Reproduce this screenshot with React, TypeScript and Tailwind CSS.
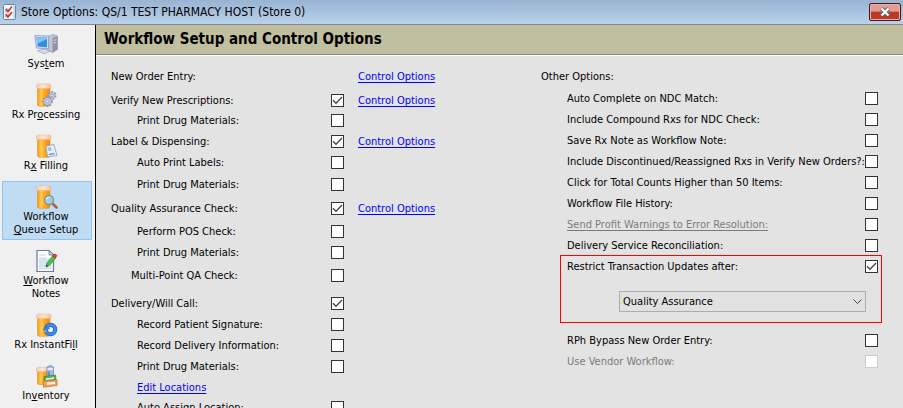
import { useState } from 'react';
import type { ReactNode } from 'react';
import clsx from 'clsx';

type NavItem = {
  id: string;
  label: ReactNode;
  icon: ReactNode;
};

type Option = {
  id: string;
  label: string;
  checked?: boolean;
  disabled?: boolean;
};

function Bottle({ children }: { children?: ReactNode }) {
  return (
    <svg viewBox="0 0 24 24" className="h-6 w-6" aria-hidden="true">
      <defs>
        <linearGradient id="bottle" x1="0" x2="1">
          <stop offset="0" stopColor="#f39a10" />
          <stop offset="0.3" stopColor="#ffcb55" />
          <stop offset="0.55" stopColor="#ffa91f" />
          <stop offset="1" stopColor="#f08a0a" />
        </linearGradient>
        <linearGradient id="cap" x1="0" x2="1">
          <stop offset="0" stopColor="#f8cbb0" />
          <stop offset="0.5" stopColor="#ffe6d6" />
          <stop offset="1" stopColor="#f3bc9c" />
        </linearGradient>
      </defs>
      <path d="M3.500 4.500h12.500v17q0 1.800-1.800 1.800h-8.900q-1.800 0-1.800-1.800z" fill="url(#bottle)" stroke="#e08a1c" strokeWidth="0.500" />
      <rect x="2.500" y="1" width="14.500" height="4.500" rx="1.500" fill="url(#cap)" stroke="#e9b595" strokeWidth="0.500" />
      {children}
    </svg>
  );
}

function Gear({ cx, cy, r }: { cx: number; cy: number; r: number }) {
  return (
    <g>
      <circle cx={cx} cy={cy} r={r} fill="none" stroke="#8a90b4" strokeWidth="2.200" strokeDasharray="1.700 1.300" />
      <circle cx={cx} cy={cy} r={r - 0.4} fill="#c9cee6" stroke="#8d94b8" strokeWidth="0.600" />
      <circle cx={cx} cy={cy} r={r / 3} fill="#fff" stroke="#737a9e" strokeWidth="0.700" />
    </g>
  );
}

function SystemIcon() {
  return (
    <svg viewBox="0 0 24 24" className="h-6 w-6" aria-hidden="true">
      <path d="M13.500 4.500l5.500-2 4.500 1.500v13.500l-5 3-5-2z" fill="#c3c6d2" stroke="#8b8fa1" strokeWidth="0.600" />
      <path d="M18.500 6l5-2v13.500l-5 3z" fill="#8f93a6" />
      <path d="M19.700 8.500l2.700-1M19.700 11l2.700-1" stroke="#e2e5ee" strokeWidth="0.900" />
      <path d="M3.500 18.800l6.500-1.800 6.500 2-6.500 2.800z" fill="#d9dbe4" stroke="#9a9eb0" strokeWidth="0.700" />
      <path d="M.8 3.500l13.700.5v12.800L2.500 16z" fill="#dcdfea" stroke="#8d93ab" strokeWidth="0.800" />
      <path d="M2.300 5l10.700.5v9.700l-9.300-.7z" fill="#2b8eea" />
      <path d="M2.300 5l10.700.5v1.500L3.200 12z" fill="#7cc2fb" />
    </svg>
  );
}

function NotesIcon() {
  return (
    <svg viewBox="0 0 24 24" className="h-6 w-6" aria-hidden="true">
      <path d="M3 1.500h12l4.500 4.500v16.500H3z" fill="#fbfcfe" stroke="#6f7a92" strokeWidth="1.200" />
      <path d="M5 9.500h12.500v11H5z" fill="#d9e3f1" />
      <path d="M15 1.500v4.500h4.500z" fill="#c9d2e2" stroke="#6f7a92" strokeWidth="0.800" />
      <path d="M5.500 6h6M5.500 9h7" stroke="#c3ccdc" strokeWidth="0.800" />
      <path d="M12 18l.8-3.800 6.200-7.700 3 2.300-6.700 7.700z" fill="#4cc43b" stroke="#2d8f26" strokeWidth="0.700" />
      <path d="M18.300 7l1.500-1.800q2-.8 3.200 1.400l-1.500 2.400z" fill="#e8402f" stroke="#b42218" strokeWidth="0.600" />
      <path d="M12 18l.6-2.300 1.600 1.200z" fill="#333" />
    </svg>
  );
}

const navItems: NavItem[] = [
  { id: 'system', label: <>Sys<u>t</u>em</>, icon: <SystemIcon /> },
  {
    id: 'processing',
    label: <>Rx Pr<u>o</u>cessing</>,
    icon: (
      <Bottle>
        <Gear cx={18} cy={12.5} r={3.4} />
        <Gear cx={13.5} cy={18.5} r={4.2} />
      </Bottle>
    ),
  },
  {
    id: 'filling',
    label: <>R<u>x</u> Filling</>,
    icon: (
      <Bottle>
        <path d="M12 12l8-1.500 3 11-9.500 1.500z" fill="#e6eefb" stroke="#8a9cc4" strokeWidth="0.800" />
        <path d="M13.500 13.500l3.500-.6.800 3.500-3.400.6z" fill="#a9bde4" />
        <path d="M14.800 20.500l5.500-.9" stroke="#5f78b4" strokeWidth="1.200" />
      </Bottle>
    ),
  },
  {
    id: 'queue',
    label: <>Workflow<br /><u>Q</u>ueue Setup</>,
    icon: (
      <Bottle>
        <path d="M18.300 18.300l4.200 4.200" stroke="#b0603a" strokeWidth="2.600" strokeLinecap="round" />
        <circle cx="15" cy="15" r="4.500" fill="#9fcfe4" stroke="#7f939e" strokeWidth="1.300" />
        <path d="M12.300 14.300q1-2.300 3.400-2.300" stroke="#eefaff" strokeWidth="1.200" fill="none" />
      </Bottle>
    ),
  },
  { id: 'notes', label: <><u>W</u>orkflow<br />Notes</>, icon: <NotesIcon /> },
  {
    id: 'instant',
    label: <>Rx InstantFi<u>l</u>l</>,
    icon: (
      <Bottle>
        <circle cx="16.500" cy="16.500" r="4.700" fill="#f4f0ea" stroke="#1f66cc" strokeWidth="4.200" />
        <circle cx="16.500" cy="16.500" r="4.700" fill="none" stroke="#3a8bea" strokeWidth="2.800" />
        <path d="M9 17.500l2.500-6.500 4.500 5z" fill="#2f7de0" />
        <path d="M9 19l3.200-1.800" stroke="#ffa91f" strokeWidth="1.300" />
      </Bottle>
    ),
  },
  {
    id: 'inventory',
    label: <>In<u>v</u>entory</>,
    icon: (
      <svg viewBox="0 0 24 24" className="h-6 w-6" aria-hidden="true">
        <path d="M3.500 6h11v14.500H5q-1.500 0-1.500-1.500z" fill="url(#bottle)" stroke="#e08a1c" strokeWidth="0.500" />
        <rect x="2.500" y="3.500" width="12" height="4" rx="1.300" fill="url(#cap)" stroke="#e9b595" strokeWidth="0.500" />
        <path d="M13 3q3.500-3 6.500 0v10H13z" fill="#a3bce6" stroke="#6c86ba" strokeWidth="0.800" />
        <path d="M13.500 5h5.500" stroke="#eef4ff" strokeWidth="1.600" />
        <path d="M15 7.500v5" stroke="#5577b8" strokeWidth="1.400" />
        <path d="M10 12.500l11.500-1.500.5 5-12 1.800z" fill="#4fb445" stroke="#2f8a2b" strokeWidth="0.700" />
        <path d="M12 14.200l8-1v1.800l-8 1z" fill="#e6f6e2" />
        <path d="M9.500 17l13.500-1.200v5.700l-13.500 1.700z" fill="#eda061" stroke="#bd7038" strokeWidth="0.700" />
        <path d="M13 18.400l8-.7v2.300l-8 .9z" fill="#fff0dd" />
      </svg>
    ),
  },
];

const otherOptions: Option[] = [
  { id: 'auto-complete', label: 'Auto Complete on NDC Match:' },
  { id: 'compound', label: 'Include Compound Rxs for NDC Check:' },
  { id: 'save-note', label: 'Save Rx Note as Workflow Note:' },
  { id: 'discontinued', label: 'Include Discontinued/Reassigned Rxs in Verify New Orders?:' },
  { id: 'total-counts', label: 'Click for Total Counts Higher than 50 Items:' },
  { id: 'file-history', label: 'Workflow File History:' },
];

function CheckBox({ id, checked = false, disabled }: Omit<Option, 'label'>) {
  const [on, setOn] = useState(checked);
  return (
    <span className="relative block size-[13px] shrink-0">
      <input
        id={id}
        type="checkbox"
        checked={on}
        disabled={disabled}
        onChange={(e) => setOn(e.target.checked)}
        className="block size-[13px] appearance-none border border-[#333] bg-white disabled:border-[#ccc]"
      />
      {on && (
        <svg viewBox="0 0 13 13" className="pointer-events-none absolute inset-0" aria-hidden="true">
          <path d="M2 6.300l3 3 6-6.300" fill="none" stroke="#444" strokeWidth="1.300" />
        </svg>
      )}
    </span>
  );
}

function ControlLink() {
  return (
    <a href="#control" className="ml-3.5 text-[#00f] underline underline-offset-2">
      Control Options
    </a>
  );
}

type RowProps = Option & { className?: string; children?: ReactNode };

function WorkflowRow({ id, label, checked, className, children }: RowProps) {
  return (
    <div className={clsx('flex h-[21px] items-center', className)}>
      <label htmlFor={id} className="w-[220px]">{label}</label>
      <CheckBox id={id} checked={checked} />
      {children}
    </div>
  );
}

// Sub-option, indented below its section while the boxes stay in one column
function SubRow({ id, label, className }: RowProps) {
  return (
    <div className={clsx('flex h-[21px] items-center pl-[26px]', className)}>
      <label htmlFor={id} className="w-[194px]">{label}</label>
      <CheckBox id={id} />
    </div>
  );
}

function OtherRow({ id, label, checked, disabled }: Option) {
  return (
    <div className="flex h-[21px] items-center justify-between">
      <label htmlFor={id} className={clsx(disabled && 'text-[#7b7b7b]')}>{label}</label>
      <CheckBox id={id} checked={checked} disabled={disabled} />
    </div>
  );
}

function TitleBar() {
  return (
    <header className="flex h-[25px] shrink-0 items-center border-b border-[#858585] bg-linear-to-b from-[#98b4d2] to-[#bad1ea] pr-0.5 pl-[3px]">
      <svg viewBox="0 0 13 16" className="h-4 w-[13px]" aria-hidden="true">
        <rect x="0.500" y="0.500" width="12" height="15" rx="1" fill="#f4f8fc" stroke="#5d88b0" />
        <path d="M11 1v14" stroke="#a9c8e2" />
        <path d="M2.500 5h3v3h-3zM2.500 10h3v3h-3z" fill="none" stroke="#8d9aa8" strokeWidth="0.700" />
        <path d="M3 5l2 2.500L9 2.500M3 10.500l2 2.500 4-5" fill="none" stroke="#d42a20" strokeWidth="1.500" />
      </svg>
      <h1 className="ml-[5px] grow text-xs">Store Options: QS/1 TEST PHARMACY HOST (Store 0)</h1>
      <button
        type="button"
        aria-label="Close"
        className="flex h-[18px] w-8 items-center justify-center rounded-xs border border-[#4d1515] bg-linear-to-b from-[#e09d92] from-45% to-[#b93a26] to-50% shadow-[inset_0_0_0_1px_#e8b0a6]"
      >
        <svg viewBox="0 0 12 10" className="h-2.5 w-3" aria-hidden="true">
          <path d="M2.500 1.500l7 7M9.500 1.500l-7 7" stroke="#57616e" strokeWidth="4" />
          <path d="M2.500 1.500l7 7M9.500 1.500l-7 7" stroke="#fff" strokeWidth="2.200" />
        </svg>
      </button>
    </header>
  );
}

function Sidebar() {
  const [active, setActive] = useState('queue');
  return (
    <nav className="flex w-24 shrink-0 flex-col gap-[5px] border-r border-black bg-[#f0f0f0] pt-[3px] pr-[3px] pl-0.5">
      {navItems.map(({ id, label, icon }) => (
        <button
          key={id}
          type="button"
          onClick={() => setActive(id)}
          className={clsx(
            'flex flex-col items-center gap-px border py-[3px] pr-0.5 leading-[13px]',
            active === id ? 'border-[#90c4f0] bg-[#c0dcf3]' : 'border-transparent',
          )}
        >
          {icon}
          <span className="text-center">{label}</span>
        </button>
      ))}
    </nav>
  );
}

export default function App() {
  return (
    <div className="flex h-screen flex-col overflow-hidden bg-[#e3e3e3] font-['DejaVu_Sans_Condensed','DejaVu_Sans',sans-serif] text-[11px] leading-[13px] text-black">
      <TitleBar />
      <div className="flex min-h-0 grow">
        <Sidebar />
        <main className="min-w-0 grow">
          <h2 className="flex h-[30px] items-center border-b border-[#858585] bg-[#c0bf9f] pl-2 text-[15px] font-bold">
            Workflow Setup and Control Options
          </h2>
          <div className="flex border-t border-white pt-2.5 pl-[15px] whitespace-nowrap">
            <section className="w-[430px] shrink-0">
              <div className="flex h-[21px] items-center">
                <span className="w-[233px]">New Order Entry:</span>
                <ControlLink />
              </div>
              <WorkflowRow id="verify" label="Verify New Prescriptions:" checked className="mt-[3px]">
                <ControlLink />
              </WorkflowRow>
              <SubRow id="verify-print" label="Print Drug Materials:" className="-mt-px" />
              <WorkflowRow id="label" label="Label & Dispensing:" checked>
                <ControlLink />
              </WorkflowRow>
              <SubRow id="label-auto" label="Auto Print Labels:" />
              <SubRow id="label-print" label="Print Drug Materials:" className="mt-px" />
              <WorkflowRow id="quality" label="Quality Assurance Check:" checked className="mt-[3px]">
                <ControlLink />
              </WorkflowRow>
              <SubRow id="quality-pos" label="Perform POS Check:" className="mt-0.5" />
              <SubRow id="quality-print" label="Print Drug Materials:" />
              <div className="mt-0.5 flex h-[21px] items-center pl-5">
                <label htmlFor="quality-multi" className="w-[200px]">Multi-Point QA Check:</label>
                <CheckBox id="quality-multi" />
              </div>
              <WorkflowRow id="delivery" label="Delivery/Will Call:" checked className="mt-[7px]" />
              <SubRow id="delivery-signature" label="Record Patient Signature:" />
              <SubRow id="delivery-info" label="Record Delivery Information:" />
              <SubRow id="delivery-print" label="Print Drug Materials:" />
              <div className="flex h-5 items-center pl-[26px]">
                <a href="#locations" className="text-[#00f] underline underline-offset-2">Edit Locations</a>
              </div>
              <SubRow id="delivery-assign" label="Auto Assign Location:" />
            </section>

            <section className="grow pr-[21px]">
              <h3 className="flex h-[21px] items-center">Other Options:</h3>
              <div className="mt-px pr-1 pl-[26px]">
                {otherOptions.map((o) => (
                  <OtherRow key={o.id} {...o} />
                ))}
                <div className="flex h-[21px] items-center justify-between">
                  <label htmlFor="profit" className="text-[#7b7b7b] underline underline-offset-2">
                    Send Profit Warnings to Error Resolution:
                  </label>
                  <CheckBox id="profit" />
                </div>
                <OtherRow id="reconciliation" label="Delivery Service Reconciliation:" />
              </div>
              <div className="-mt-px ml-[19px] border border-[#f00] pr-[3px] pb-2.5 pl-1.5">
                <OtherRow id="restrict" label="Restrict Transaction Updates after:" checked />
                <div className="relative mt-3.5 mr-3 ml-[52px]">
                  <select
                    aria-label="Restrict Transaction Updates after"
                    defaultValue="qa"
                    className="block h-[21px] w-full appearance-none border border-[#adadad] bg-[#e1e1e1] pl-[3px] text-[11px]"
                  >
                    <option value="qa">Quality Assurance</option>
                  </select>
                  <svg viewBox="0 0 9 5" className="pointer-events-none absolute top-2 right-1 h-[5px] w-[9px]" aria-hidden="true">
                    <path d="M.5.5l4 4 4-4" fill="none" stroke="#444" />
                  </svg>
                </div>
              </div>
              <div className="mt-[7px] pr-1 pl-[26px]">
                <OtherRow id="bypass" label="RPh Bypass New Order Entry:" />
                <OtherRow id="vendor" label="Use Vendor Workflow:" disabled />
              </div>
            </section>
          </div>
        </main>
      </div>
    </div>
  );
}
